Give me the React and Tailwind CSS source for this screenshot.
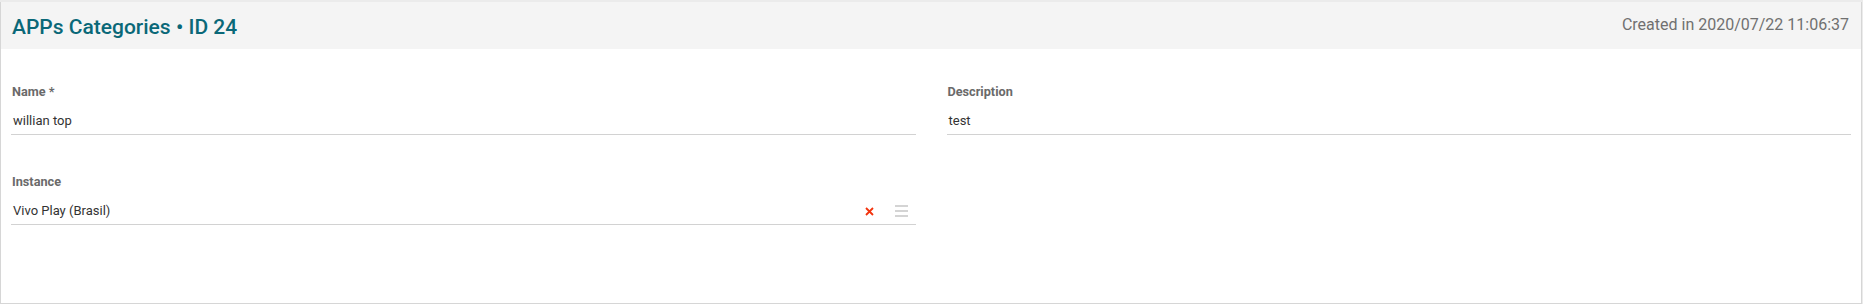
export default function App() {
  const font = { fontFamily: 'Roboto, "Noto Sans", sans-serif' };

  return (
    <div className="w-[1863px] h-[304px] bg-[#ebebeb] pt-[2px] pr-[1px]" style={font}>
      <div className="h-[302px] bg-white border-l border-r border-b border-[#d6d6d6] flex flex-col">
        {/* Header */}
        <div className="h-[47px] bg-[#f4f4f4] flex items-center justify-between pl-[11px] pr-[12px] pt-[3px]">
          <h1 className="text-[21px] leading-none text-[#0a6878] font-medium">APPs Categories • ID 24</h1>
          <span className="text-[16px] leading-none text-[#707070] mb-[5px]">Created in 2020/07/22 11:06:37</span>
        </div>

        {/* Form */}
        <div className="pt-[35px] pl-[10px] pr-[10px] grid grid-cols-2 gap-x-[31px] gap-y-[39px]">
          <Field label="Name *" value="willian top" />
          <Field label="Description" value="test" />
          <Field label="Instance" value="Vivo Play (Brasil)" select />
        </div>
      </div>
    </div>
  );
}

function Field({ label, value, select }) {
  return (
    <div>
      <label className="block text-[12.7px] leading-[16px] font-bold text-[#6a6a6a] pl-[1px]">{label}</label>
      <div className="flex items-center pt-[13px] pb-[5px] border-b border-[#d2d2d2] pl-[2px]">
        <span className="flex-1 text-[13px] leading-[16px] text-[#333]">{value}</span>
        {select && (
          <div className="flex items-center gap-[21px] pr-[8px]">
            <svg width="9" height="9" viewBox="0 0 9 9">
              <path d="M1 1L8 8M8 1L1 8" stroke="#f2330d" strokeWidth="1.8" />
            </svg>
            <svg width="13" height="12" viewBox="0 0 13 12">
              <path d="M0 1H13M0 6H13M0 11H13" stroke="#aaa" strokeWidth="1.2" />
            </svg>
          </div>
        )}
      </div>
    </div>
  );
}
